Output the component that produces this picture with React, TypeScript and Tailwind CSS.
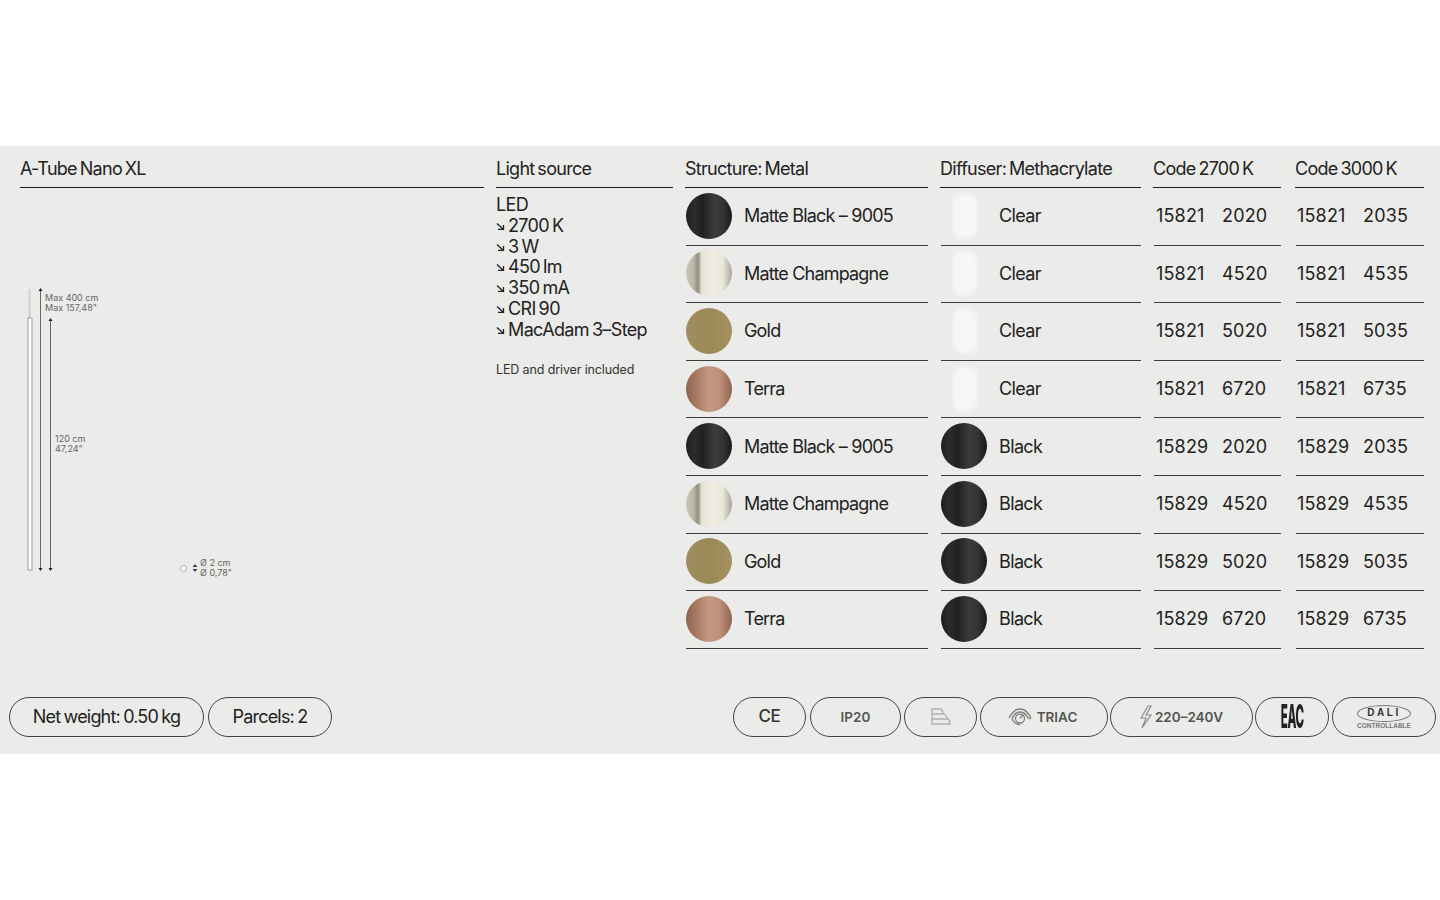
import { ReactNode } from "react";

const black = "bg-[linear-gradient(90deg,#1d1e20_0%,#2b2c2e_18%,#1f2022_36%,#3a3b3d_62%,#333436_80%,#18191b_100%)]";
const champagne = "bg-[linear-gradient(90deg,#c9c5b8_0%,#bdb8aa_16%,#8f8b7e_26%,#e6e3d6_34%,#f1efe4_60%,#e9e6da_80%,#aaa69a_100%)]";
const gold = "bg-[linear-gradient(90deg,#a08e5f_0%,#9a8957_50%,#a39161_100%)]";
const terra = "bg-[linear-gradient(90deg,#8e6250_0%,#a87860_22%,#c49a83_50%,#bd8f78_75%,#8f6250_100%)]";

const rows = [
  { finish: "Matte Black – 9005", swatch: black, diffuser: "Clear", code27: "2020", code30: "2035", prefix: "15821" },
  { finish: "Matte Champagne", swatch: champagne, diffuser: "Clear", code27: "4520", code30: "4535", prefix: "15821" },
  { finish: "Gold", swatch: gold, diffuser: "Clear", code27: "5020", code30: "5035", prefix: "15821" },
  { finish: "Terra", swatch: terra, diffuser: "Clear", code27: "6720", code30: "6735", prefix: "15821" },
  { finish: "Matte Black – 9005", swatch: black, diffuser: "Black", code27: "2020", code30: "2035", prefix: "15829" },
  { finish: "Matte Champagne", swatch: champagne, diffuser: "Black", code27: "4520", code30: "4535", prefix: "15829" },
  { finish: "Gold", swatch: gold, diffuser: "Black", code27: "5020", code30: "5035", prefix: "15829" },
  { finish: "Terra", swatch: terra, diffuser: "Black", code27: "6720", code30: "6735", prefix: "15829" },
];

const specs = ["2700 K", "3 W", "450 lm", "350 mA", "CRI 90", "MacAdam 3–Step"];

const Arrow = () => (
  <svg width="9" height="9" viewBox="0 0 9 9" className="mr-[3px] mt-[6px] shrink-0">
    <path d="M1 1.5 L7 7 M2 7.3 H7.5 V3" fill="none" stroke="#222" strokeWidth="1.3" />
  </svg>
);

const Head = ({ children, className }: { children: ReactNode; className: string }) => (
  <div className={`h-[42px] border-b-[1.5px] border-[#1c1c1c] pt-[11px] text-[18px] leading-[24px] tracking-[-0.04em] [word-spacing:-1.5px] text-[#222] ${className}`}>
    {children}
  </div>
);

const Cell = ({ children, className = "" }: { children: ReactNode; className?: string }) => (
  <div className={`flex h-[57.6px] items-center border-b-[1.5px] border-[#3a3a3a] pb-[1px] text-[18px] text-[#222] ${className}`}>
    {children}
  </div>
);

const Pill = ({ children, className }: { children: ReactNode; className: string }) => (
  <div className={`flex h-[40px] items-center justify-center rounded-[20px] border-[1.5px] border-[#444] ${className}`}>
    {children}
  </div>
);

const Diagram = () => (
  <div className="relative mt-[100px] h-[290px] text-[9px] leading-[10px] text-[#666]">
    <svg width="50" height="290" viewBox="0 0 50 290" className="block">
      <rect x="8.5" y="1" width="2" height="29" fill="#cfcfcd" />
      <rect x="8" y="30" width="4" height="252" fill="#fff" stroke="#8a8a8a" strokeWidth="0.8" />
      <path d="M20.5 2V281M30.5 32V281" stroke="#666" strokeWidth="1" />
      <path d="M20.5 0l2 3h-4zM30.5 30l2 3h-4zM20.5 283l2-3h-4zM30.5 283l2-3h-4z" fill="#222" />
    </svg>
    <div className="absolute left-[25px] top-[5px]">Max 400 cm<br />Max 157,48"</div>
    <div className="absolute left-[35px] top-[146px]">120 cm<br />47,24"</div>
    <div className="absolute left-[160px] top-[270px] flex items-center">
      <span className="h-[7px] w-[7px] rounded-full border border-[#aaa] bg-white" />
      <svg width="6" height="8" viewBox="0 0 6 8" className="ml-[5px]">
        <path d="M3 0l2.5 3h-5zM3 8l2.5-3h-5z" fill="#444" />
      </svg>
      <span className="ml-[2px] block">Ø 2 cm<br />Ø 0,78"</span>
    </div>
  </div>
);

const App = () => {
  return (
    <div className="min-h-screen bg-white pt-[146px] font-['Inter',sans-serif]">
      <div className="flex h-[608px] flex-col justify-between bg-[#ebebe9] pb-[17px]">
        <div className="flex pl-[20px] pr-[16px]">
          {/* Product + drawing */}
          <div className="w-[464px]">
            <Head className="w-full">A-Tube Nano XL</Head>
            <Diagram />
          </div>

          {/* Light source */}
          <div className="ml-[12px] w-[177px]">
            <Head className="w-full">Light source</Head>
            <div className="pt-[7px] text-[18px] leading-[20.8px] tracking-[-0.035em] [word-spacing:-1.5px] text-[#222]">
              <div>LED</div>
              {specs.map((spec) => (
                <div key={spec} className="flex">
                  <Arrow />
                  {spec}
                </div>
              ))}
              <div className="mt-[21px] text-[12.5px] leading-[16px] tracking-[-0.01em] [word-spacing:0] text-[#333]">LED and driver included</div>
            </div>
          </div>

          {/* Structure */}
          <div className="ml-[12px] w-[243px]">
            <Head className="w-full">Structure: Metal</Head>
            {rows.map((row, i) => (
              <Cell key={i} className="ml-[1px] tracking-[-0.045em]">
                <span className={`h-[46px] w-[46px] shrink-0 rounded-full ${row.swatch}`} />
                <span className="ml-[12px]">{row.finish}</span>
              </Cell>
            ))}
          </div>

          {/* Diffuser */}
          <div className="ml-[12px] w-[201px]">
            <Head className="w-full">Diffuser: Methacrylate</Head>
            {rows.map((row, i) => (
              <Cell key={i} className="ml-[1px] tracking-[-0.035em]">
                {row.diffuser === "Clear" ? (
                  <span className="ml-[12px] mr-[10px] h-[44px] w-[24px] shrink-0 rounded-[8px] bg-[#f6f6f4] blur-[2px]" />
                ) : (
                  <span className={`h-[46px] w-[46px] shrink-0 rounded-full ${black}`} />
                )}
                <span className="ml-[12px]">{row.diffuser}</span>
              </Cell>
            ))}
          </div>

          {/* Codes */}
          <div className="ml-[12px] w-[128px]">
            <Head className="w-full">Code 2700 K</Head>
            {rows.map((row, i) => (
              <Cell key={i} className="ml-[1px] pl-[2px] tracking-[0.01em]">
                <span className="w-[66px]">{row.prefix}</span>
                {row.code27}
              </Cell>
            ))}
          </div>
          <div className="ml-[14px] w-[129px]">
            <Head className="w-full">Code 3000 K</Head>
            {rows.map((row, i) => (
              <Cell key={i} className="ml-[1px] pl-[1px] tracking-[0.01em]">
                <span className="w-[66px]">{row.prefix}</span>
                {row.code30}
              </Cell>
            ))}
          </div>
        </div>

        {/* Footer pills */}
        <div className="flex items-center pl-[9px] pr-[4px]">
          <Pill className="w-[195px] pb-[2px] text-[18px] tracking-[-0.045em] [word-spacing:-1px] text-[#222]">Net weight: 0.50 kg</Pill>
          <Pill className="ml-[4px] w-[124px] pb-[2px] text-[18px] tracking-[-0.045em] [word-spacing:-1px] text-[#222]">Parcels: 2</Pill>

          <Pill className="ml-auto w-[73px] text-[17px] font-medium tracking-[-0.02em] text-[#333]">CE</Pill>
          <Pill className="ml-[4px] w-[91px] text-[13.5px] font-semibold text-[#555]">IP20</Pill>
          <Pill className="ml-[3px] w-[73px]">
            <svg width="22" height="18" viewBox="0 0 22 18" fill="none" stroke="#b0b0ae" strokeWidth="1.4">
              <path d="M2 1h8c2 0 3 2 3 5H2zM2 6h11c2 0 4 2 4 5H2zM2 11h15c2 0 3 2 3 5H2z" />
            </svg>
          </Pill>
          <Pill className="ml-[3px] w-[128px] gap-[5px] pr-[3px] text-[13.5px] font-semibold text-[#555]">
            <svg width="24" height="20" viewBox="0 0 24 20" fill="none" stroke="#808080" strokeWidth="1.3">
              <path d="M1 11C4 5 8 2 12 2s8 3 11 9" />
              <path d="M4 12C6 7 9 5 12 5s6 2 8 6l3 1" />
              <circle cx="12" cy="11.5" r="4.5" />
              <path d="M12 11.5l3-4" />
              <path d="M4 12c2 4 5 5.5 8 5.5" />
            </svg>
            TRIAC
          </Pill>
          <Pill className="ml-[2px] w-[143px] gap-[1px] pr-[2px] text-[13.5px] font-semibold text-[#555]">
            <svg width="16" height="24" viewBox="0 0 16 24" fill="none" stroke="#888" strokeWidth="1.1">
              <path d="M10 1L3 13h5L4 23l9-13H8l5-9z" />
            </svg>
            220–240V
          </Pill>
          <Pill className="ml-[2px] w-[74px]">
            <span className="inline-block scale-x-[0.36] text-[32px] font-extrabold leading-none tracking-[-0.02em] text-[#222]">EAC</span>
          </Pill>
          <Pill className="ml-[3px] w-[104px] flex-col">
            <span className="flex h-[17px] w-[54px] items-center justify-center rounded-[50%] border border-[#777] font-['Liberation_Sans',sans-serif] text-[10px] font-bold leading-none tracking-[0.25em] text-[#333]">DALI</span>
            <span className="font-['Liberation_Sans',sans-serif] text-[6.5px] font-bold leading-[8px] text-[#777]">CONTROLLABLE</span>
          </Pill>
        </div>
      </div>
    </div>
  );
};

export default App;
